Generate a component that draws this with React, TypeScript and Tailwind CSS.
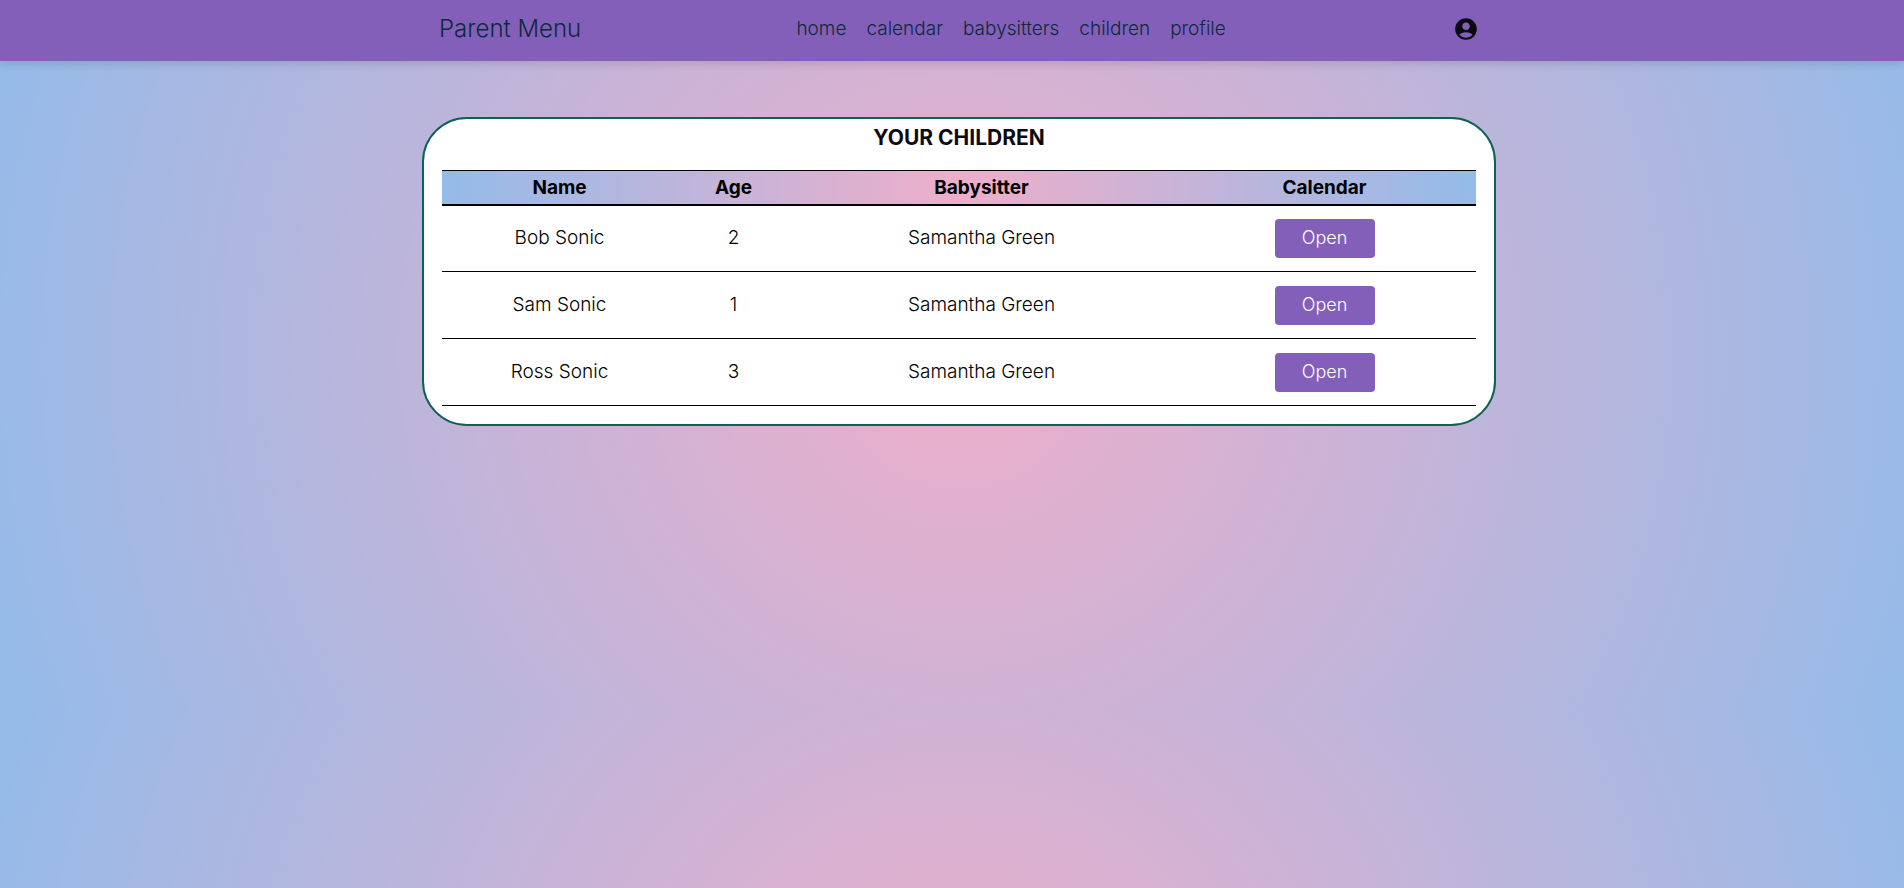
import { MdAccountCircle } from "react-icons/md";

const links = ["home", "calendar", "babysitters", "children", "profile"];

const children = [
  { name: "Bob Sonic", age: 2, babysitter: "Samantha Green" },
  { name: "Sam Sonic", age: 1, babysitter: "Samantha Green" },
  { name: "Ross Sonic", age: 3, babysitter: "Samantha Green" },
];

function Header() {
  return (
    <header className="flex h-[61px] justify-center bg-[#835fba] pl-[14px] shadow-[0_2px_10px_rgba(0,0,0,0.15)]">
      <div className="flex w-full max-w-[1040px] items-center justify-between pb-[3px] text-[#0c2a3a]">
        <a href="#" className="text-[24px] leading-7">Parent Menu</a>
        <nav className="flex gap-5 pr-3 text-[19px] leading-6">
          {links.map((link) => (
            <a key={link} href={`#${link}`}>{link}</a>
          ))}
        </nav>
        <button type="button" aria-label="Account" className="text-[#0c0a10]">
          <MdAccountCircle size={26} />
        </button>
      </div>
    </header>
  );
}

function ChildrenCard() {
  return (
    <section className="w-full max-w-[1074px] rounded-[45px] border-2 border-[#0d6353] bg-white px-[18px] pb-[18px]">
      <h1 className="mb-4 pt-[3px] text-center text-[21px] leading-8 font-bold text-[#0c0a10]">YOUR CHILDREN</h1>
      <table className="w-full table-fixed border-collapse text-center text-[19px] leading-6 text-black">
        <colgroup>
          <col className="w-[235px]" />
          <col className="w-[113px]" />
          <col className="w-[383px]" />
          <col />
        </colgroup>
        <thead className="border-t border-b-2 border-black bg-[radial-gradient(circle,#eeaeca_0%,#94bbe9_100%)]">
          <tr className="h-[34px] font-bold">
            <th scope="col" className="pt-[2px]">Name</th>
            <th scope="col" className="pt-[2px]">Age</th>
            <th scope="col" className="pt-[2px]">Babysitter</th>
            <th scope="col" className="pt-[2px]">Calendar</th>
          </tr>
        </thead>
        <tbody>
          {children.map((child) => (
            <tr key={child.name} className="h-[67px] border-b border-black">
              <td>{child.name}</td>
              <td>{child.age}</td>
              <td>{child.babysitter}</td>
              <td>
                <button type="button" className="h-[39px] w-[100px] rounded bg-[#835fba] align-middle text-[18px] text-white">
                  Open
                </button>
              </td>
            </tr>
          ))}
        </tbody>
      </table>
    </section>
  );
}

export default function App() {
  return (
    <div className="min-h-screen bg-[radial-gradient(circle_at_960px_50%,#eeaeca_0%,#94bbe9_1023px)] bg-[length:100%_710px] font-['Inter',sans-serif] font-light">
      <Header />
      <main className="flex justify-center pt-14 pl-[14px]">
        <ChildrenCard />
      </main>
    </div>
  );
}
